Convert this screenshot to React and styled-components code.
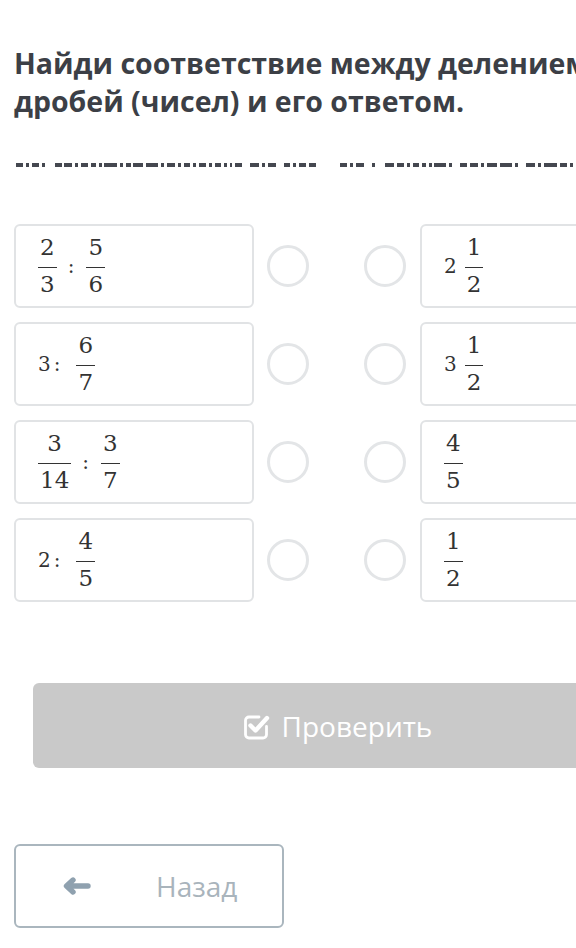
import React from "react";
import styled, { createGlobalStyle } from "styled-components";

const Global = createGlobalStyle`
  html, body { margin: 0; padding: 0; background: #fff; overflow: hidden; }
  body { font-family: "Open Sans", "Noto Sans", sans-serif; }
`;

const Page = styled.div`
  width: 646px;
  padding: 44px 14px 0;
`;

const Title = styled.h1`
  margin: 0;
  font-size: 28.5px;
  line-height: 38px;
  font-weight: 700;
  color: #3c3f46;
  white-space: nowrap;
`;

const DashLine = styled.div`
  display: flex;
  margin-top: 43px;
  padding-left: 2px;
  height: 4px;
  white-space: nowrap;
`;

const Dash = styled.span`
  flex: none;
  display: block;
  height: 4px;
  width: ${(p) => p.$w}px;
  margin-right: ${(p) => p.$g}px;
  background: #454850;
`;

const Rows = styled.div`
  display: flex;
  flex-direction: column;
  gap: 14px;
  margin-top: 57px;
`;

const Row = styled.div`
  display: flex;
  align-items: center;
`;

const Card = styled.div`
  flex: none;
  box-sizing: border-box;
  width: 240px;
  height: 84px;
  border: 2px solid #e1e3e5;
  border-radius: 6px;
  padding-left: 22px;
  display: flex;
  align-items: center;
  margin-left: ${(p) => p.$ml || 0}px;
  font-family: "DejaVu Serif", "Liberation Serif", serif;
  color: #333;
`;

const Circle = styled.div`
  flex: none;
  box-sizing: border-box;
  width: 42px;
  height: 42px;
  border-radius: 50%;
  border: 3px solid #e3e5e7;
  margin-left: ${(p) => p.$ml}px;
`;

const FracBox = styled.span`
  display: inline-flex;
  flex-direction: column;
  align-items: stretch;
  font-size: 23px;
  line-height: 25px;
  text-align: center;
`;

const Num = styled.span`
  display: block;
  padding: 0 2px;
`;

const Bar = styled.span`
  display: block;
  height: 1.5px;
  background: #333;
  margin-top: 7px;
  margin-bottom: 4px;
`;

const Int = styled.span`
  font-size: 20px;
  line-height: 25px;
  margin-right: ${(p) => p.$mr}px;
`;

const Colon = styled.span`
  font-size: 20px;
  line-height: 25px;
  margin: 0 ${(p) => p.$r}px 0 ${(p) => p.$l}px;
`;

const Frac = ({ n, d }) => (
  <FracBox>
    <Num>{n}</Num>
    <Bar />
    <Num>{d}</Num>
  </FracBox>
);

const CheckBtn = styled.div`
  margin: 81px 19px 0;
  height: 85px;
  border-radius: 6px;
  background: #c9c9c9;
  color: #fff;
  display: flex;
  align-items: center;
  justify-content: center;
  gap: 12px;
  font-size: 28px;
`;

const BackBtn = styled.div`
  margin-top: 76px;
  box-sizing: border-box;
  width: 270px;
  height: 84px;
  border: 2px solid #aab6be;
  border-radius: 6px;
  display: flex;
  align-items: center;
  padding-left: 46px;
  gap: 64px;
  color: #a9b4bc;
  font-size: 28px;
`;

const CheckIcon = () => (
  <svg width="28" height="28" viewBox="0 0 28 28" fill="none">
    <path
      d="M17 5H7a3.5 3.5 0 0 0-3.5 3.5v14A3.5 3.5 0 0 0 7 26h14a3.5 3.5 0 0 0 3.5-3.5v-8"
      stroke="#fff"
      strokeWidth="2.8"
      strokeLinecap="round"
    />
    <path
      d="M8.5 13.5l5 5L25 6"
      stroke="#fff"
      strokeWidth="4.4"
      strokeLinecap="round"
      strokeLinejoin="round"
    />
  </svg>
);

const ArrowIcon = () => (
  <svg width="30" height="18" viewBox="0 0 30 18" fill="none">
    <path
      d="M11 3L4.5 9L11 15M5 9H26"
      stroke="#8fa1af"
      strokeWidth="5.4"
      strokeLinecap="round"
      strokeLinejoin="round"
    />
  </svg>
);

const left = [
  [7,3],[3,3],[7,3],[3,10],[7,2],[8,3],[3,3],[7,3],[5,3],[3,2],[13,3],[3,3],[5,2],[10,3],[12,3],[3,3],[8,3],[3,3],[6,3],[3,3],[7,3],[3,3],[6,3],[3,3],[2,3],[7,8],[9,3],[3,3],[8,8],[6,3],[3,3],[7,3],[7,24],
];
const right = [
  [7,3],[3,3],[8,8],[3,10],[9,3],[7,3],[3,3],[6,3],[4,3],[3,2],[12,3],[3,8],[7,3],[8,3],[3,3],[10,3],[12,3],[3,8],[9,3],[3,3],[13,3],[7,3],[3,3],[6,3],[8,3],[3,3],[7,8],[9,3],[3,3],[10,3],
];

const rows = [
  {
    l: (<><Frac n="2" d="3" /><Colon $l={11} $r={12}>:</Colon><Frac n="5" d="6" /></>),
    r: (<><Int $mr={8}>2</Int><Frac n="1" d="2" /></>),
  },
  {
    l: (<><Int $mr={3}>3</Int><Colon $l={0} $r={16}>:</Colon><Frac n="6" d="7" /></>),
    r: (<><Int $mr={8}>3</Int><Frac n="1" d="2" /></>),
  },
  {
    l: (<><Frac n="3" d="14" /><Colon $l={11} $r={12}>:</Colon><Frac n="3" d="7" /></>),
    r: (<Frac n="4" d="5" />),
  },
  {
    l: (<><Int $mr={3}>2</Int><Colon $l={0} $r={16}>:</Colon><Frac n="4" d="5" /></>),
    r: (<Frac n="1" d="2" />),
  },
];

export default function App() {
  return (
    <>
      <Global />
      <Page>
        <Title>
          Найди соответствие между делением
          <br />
          дробей (чисел) и его ответом.
        </Title>
        <DashLine>
          {[...left, ...right].map(([w, g], i) => (
            <Dash key={i} $w={w} $g={g} />
          ))}
        </DashLine>
        <Rows>
          {rows.map((r, i) => (
            <Row key={i}>
              <Card>{r.l}</Card>
              <Circle $ml={13} />
              <Circle $ml={55} />
              <Card $ml={14}>{r.r}</Card>
            </Row>
          ))}
        </Rows>
        <CheckBtn>
          <CheckIcon />
          <span>Проверить</span>
        </CheckBtn>
        <BackBtn>
          <ArrowIcon />
          <span>Назад</span>
        </BackBtn>
      </Page>
    </>
  );
}
